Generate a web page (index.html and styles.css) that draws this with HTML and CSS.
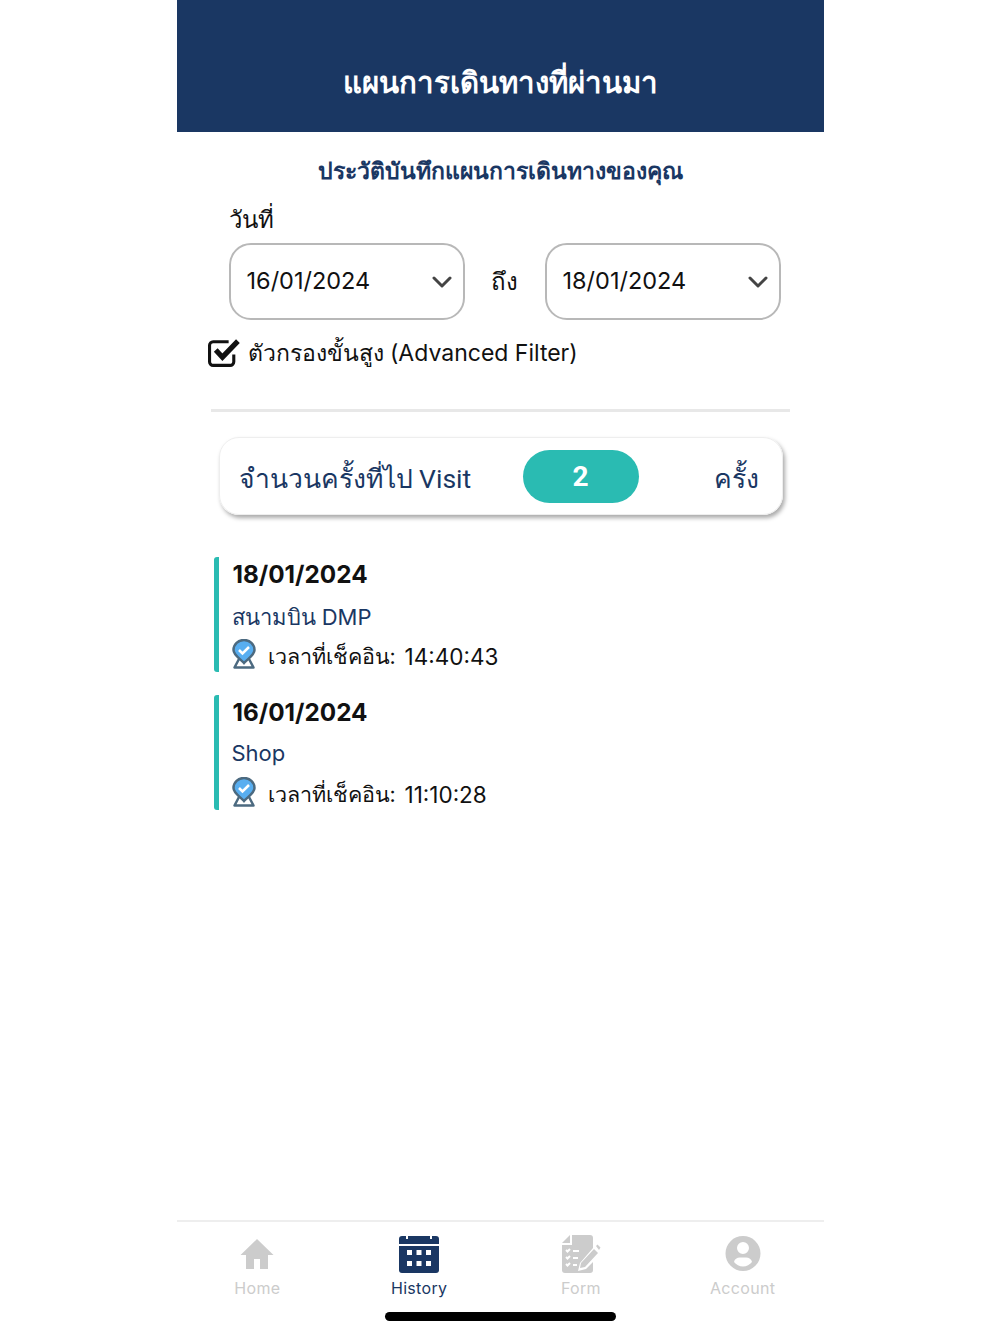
FILE: index.html

```html
<!DOCTYPE html>
<html lang="th">
<head>
    <meta charset="UTF-8">
    <meta name="viewport" content="width=device-width, initial-scale=1.0">
    <title>History</title>
    <link rel="stylesheet" href="styles.css">
</head>
<body>
<div class="app">
    <div class="top-bar">
        <p class="top-title">แผนการเดินทางที่ผ่านมา</p>
    </div>

    <div class="content">
        <p class="sub-title">ประวัติบันทึกแผนการเดินทางของคุณ</p>

        <p class="date-label">วันที่</p>
        <div class="date-row">
            <div class="date-box">
                <span class="date-value">16/01/2024</span>
                <svg class="chevron" viewBox="0 0 20 12"><path d="M2 2l8 8 8-8"/></svg>
            </div>
            <span class="date-to">ถึง</span>
            <div class="date-box">
                <span class="date-value">18/01/2024</span>
                <svg class="chevron" viewBox="0 0 20 12"><path d="M2 2l8 8 8-8"/></svg>
            </div>
        </div>

        <div class="filter-row">
            <svg class="check-icon" viewBox="0 0 32 30">
                <path class="check-box" d="M25 17v7a3.500 3.500 0 0 1-3.500 3.500H5A3.500 3.500 0 0 1 1.500 24V8A3.500 3.500 0 0 1 5 4.500h15"/>
                <path class="check-tick" d="M7.500 12.500l6.500 7L29 4"/>
            </svg>
            <span>ตัวกรองขั้นสูง (Advanced Filter)</span>
        </div>

        <div class="divider"></div>

        <div class="count-card">
            <span class="count-text">จำนวนครั้งที่ไป Visit</span>
            <span class="count-pill">2</span>
            <span class="count-unit">ครั้ง</span>
        </div>

        <div class="visit">
            <p class="visit-date">18/01/2024</p>
            <p class="visit-place">สนามบิน DMP</p>
            <div class="visit-time">
                <svg class="pin-icon" viewBox="0 0 24 30">
                    <path class="pin-base" d="M7 20L2.500 28.500h19L17 20"/>
                    <path class="pin-head" d="M12 24C8 19.500 1.500 16 1.500 11a10.500 10 0 0 1 21 0c0 5-6.500 8.500-10.500 13z"/>
                    <path class="pin-tick" d="M7 11l3.500 3.500L17 8"/>
                </svg>
                <span class="time-label">เวลาที่เช็คอิน:</span>
                <span class="time-value">14:40:43</span>
            </div>
        </div>

        <div class="visit">
            <p class="visit-date">16/01/2024</p>
            <p class="visit-place latin">Shop</p>
            <div class="visit-time">
                <svg class="pin-icon" viewBox="0 0 24 30">
                    <path class="pin-base" d="M7 20L2.500 28.500h19L17 20"/>
                    <path class="pin-head" d="M12 24C8 19.500 1.500 16 1.500 11a10.500 10 0 0 1 21 0c0 5-6.500 8.500-10.500 13z"/>
                    <path class="pin-tick" d="M7 11l3.500 3.500L17 8"/>
                </svg>
                <span class="time-label">เวลาที่เช็คอิน:</span>
                <span class="time-value">11:10:28</span>
            </div>
        </div>
    </div>

    <div class="tab-bar">
        <div class="tab">
            <svg class="tab-icon" viewBox="0 0 40 38"><path d="M20 4L3.500 20H9v14h8V24h6v10h8V20h5.500z"/></svg>
            <span>Home</span>
        </div>
        <div class="tab active">
            <svg class="tab-icon" viewBox="0 0 40 38">
                <path fill-rule="evenodd" d="M3 1h4v3h2V1h22v3h2V1h4a3 3 0 0 1 3 3v5H0V4a3 3 0 0 1 3-3zM0 11h40v24a3 3 0 0 1-3 3H3a3 3 0 0 1-3-3zM8 15v5h5v-5zm9.500 0v5h5v-5zm9.500 0v5h5v-5zM8 26v5h5v-5zm9.500 0v5h5v-5zm9.500 0v5h5v-5z"/>
            </svg>
            <span>History</span>
        </div>
        <div class="tab">
            <svg class="tab-icon" viewBox="0 0 40 38">
                <path d="M9 0v8H1zM11 0h18a3 3 0 0 1 3 3v10L19 28l-2 8 8-2 7-7v8a3 3 0 0 1-3 3H4a3 3 0 0 1-3-3V10h10z"/>
                <path d="M33 14l4 4-13 14-5 1 1-5zM35 11l1.500-1.500 3 3L38 15z"/>
                <path class="form-lines" d="M5 15l1.500 1.500L9 14M12 16h6M5 22l1.500 1.500L9 21M12 23h5M5 29l1.500 1.500L9 28M12 30h4"/>
            </svg>
            <span>Form</span>
        </div>
        <div class="tab">
            <svg class="tab-icon" viewBox="0 0 40 38">
                <path fill-rule="evenodd" d="M20 1a17.500 17.500 0 1 1 0 35 17.500 17.500 0 0 1 0-35zm0 6a6 6 0 1 0 0 12 6 6 0 0 0 0-12zm-9 20c2 2.500 5.500 4.500 9 4.500s7-2 9-4.500c-.5-3-3-4.500-6-4.500h-6c-3 0-5.500 1.500-6 4.500z"/>
            </svg>
            <span>Account</span>
        </div>
    </div>
    <div class="home-line"></div>
</div>
</body>
</html>
```

FILE: styles.css

```css
* {
    box-sizing: border-box;
}

body {
    margin: 0;
    background-color: white;
    font-family: Inter, "Noto Sans", "Liberation Sans", sans-serif;
    color: #111;
}

p {
    margin: 0;
}

.app {
    width: 647px;
    height: 1334px;
    margin: 0 auto;
    display: flex;
    flex-direction: column;
    overflow: hidden;
}

.top-bar {
    height: 132px;
    background-color: #1a3763;
    padding-top: 63px;
    text-align: center;
}

.top-title {
    color: white;
    font-size: 29.4px;
    font-weight: bold;
    line-height: 40px;
}

.content {
    flex: 1;
    padding: 0 34px 0 34px;
}

.sub-title {
    margin-top: 22px;
    height: 34px;
    line-height: 34px;
    text-align: center;
    color: #1a3763;
    font-size: 23px;
    font-weight: bold;
}

.date-label {
    margin-top: 15px;
    margin-left: 18px;
    height: 34px;
    line-height: 34px;
    font-size: 24px;
}

.date-row {
    margin-top: 6px;
    margin-left: 18px;
    display: flex;
    align-items: center;
}

.date-box {
    width: 236px;
    height: 77px;
    padding: 0 11px 0 16px;
    border: 2px solid #b8b8b8;
    border-radius: 22px;
    display: flex;
    align-items: center;
    justify-content: space-between;
    font-size: 23.5px;
}

.date-value {
    margin-bottom: 3px;
}

.date-to {
    width: 80px;
    text-align: center;
    font-size: 24px;
}

.chevron {
    width: 20px;
    height: 12px;
    fill: none;
    stroke: #444;
    stroke-width: 3;
    stroke-linecap: round;
    stroke-linejoin: round;
}

.filter-row {
    margin-top: 16px;
    margin-left: -3px;
    height: 34px;
    display: flex;
    align-items: center;
    gap: 7px;
    font-size: 23px;
}

.check-icon {
    width: 33px;
    height: 31px;
    margin-top: -2px;
    fill: none;
    stroke: #111;
}

.check-box {
    stroke-width: 3;
}

.check-tick {
    stroke-width: 5;
}

.divider {
    height: 3px;
    margin-top: 39px;
    background-color: #e8e8e8;
}

.count-card {
    width: 564px;
    height: 78px;
    margin-top: 25px;
    margin-left: 8px;
    padding: 0 23px 0 19px;
    display: flex;
    align-items: center;
    border: 1px solid #eeeeee;
    border-radius: 20px;
    box-shadow: 2px 3px 4px #aaaaaa;
    color: #1a3763;
    font-family: Roboto, "Noto Sans", sans-serif;
    font-size: 26.5px;
}

.count-text {
    width: 284px;
    margin-top: 6px;
}

.count-pill {
    width: 116px;
    height: 53px;
    border-radius: 27px;
    background-color: #2abbb2;
    color: white;
    font-size: 28px;
    font-weight: bold;
    text-align: center;
    line-height: 53px;
}

.count-unit {
    margin-left: auto;
    margin-top: 6px;
}

.visit {
    width: 560px;
    height: 115px;
    margin-top: 23px;
    margin-left: 3px;
    padding-left: 13px;
    border-left: 5px solid #2abbb2;
    border-radius: 3px;
}

.count-card + .visit {
    margin-top: 42px;
}

.visit-date {
    height: 34px;
    padding-left: 1px;
    line-height: 34px;
    font-size: 24.3px;
    font-weight: bold;
}

.visit-place {
    margin-top: 9px;
    height: 30px;
    line-height: 34px;
    font-size: 22px;
    color: #1a3763;
}

.visit-place.latin {
    margin-top: 7px;
    height: 32px;
}

.visit-time {
    margin-top: 8px;
    display: flex;
    align-items: center;
    height: 32px;
    font-size: 22.5px;
}

.time-label {
    width: 137px;
    margin-top: 4px;
    margin-left: 12px;
    white-space: nowrap;
    font-size: 21.5px;
}

.time-value {
    margin-top: 4px;
}

.pin-icon {
    width: 24px;
    height: 30px;
    flex-shrink: 0;
}

.pin-base {
    fill: none;
    stroke: #4c6a80;
    stroke-width: 2.500;
    stroke-linejoin: round;
}

.pin-head {
    fill: #58aef0;
    stroke: #4c6a80;
    stroke-width: 2.500;
}

.pin-tick {
    fill: none;
    stroke: white;
    stroke-width: 2.500;
}

.tab-bar {
    height: 82px;
    padding-top: 13px;
    border-top: 2px solid #eeeeee;
    display: flex;
}

.tab {
    width: 162px;
    display: flex;
    flex-direction: column;
    align-items: center;
    gap: 5px;
    color: #cccccc;
    font-size: 16px;
    letter-spacing: 0.3px;
}

.tab.active {
    color: #1a3763;
}

.tab-icon {
    width: 40px;
    height: 38px;
    fill: #cccccc;
}

.tab.active .tab-icon {
    fill: #1a3763;
}

.form-lines {
    fill: none;
    stroke: white;
    stroke-width: 2;
}

.home-line {
    width: 231px;
    height: 9px;
    margin: 10px auto 13px;
    border-radius: 5px;
    background-color: black;
    flex-shrink: 0;
}
```
